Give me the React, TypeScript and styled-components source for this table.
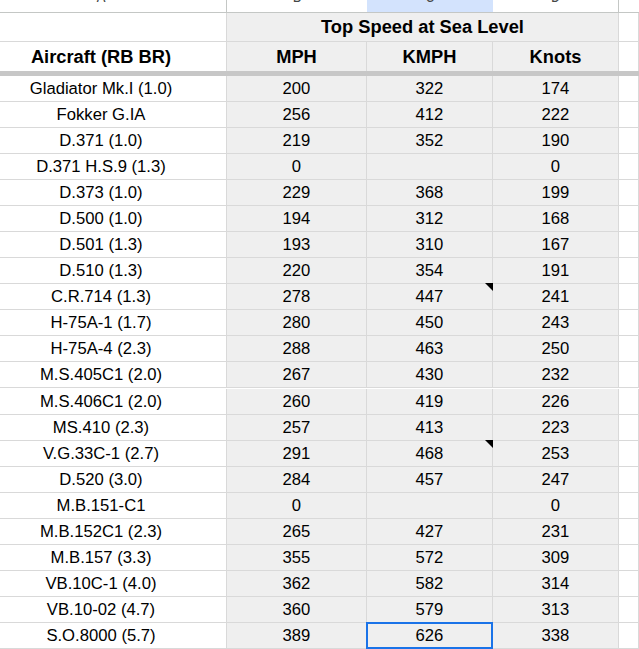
import React from "react";
import styled, { createGlobalStyle, css } from "styled-components";

const Global = createGlobalStyle`
  html, body { margin: 0; padding: 0; background: #fff; overflow: hidden; }
  body { font-family: "Liberation Sans", Arial, sans-serif; color: #000; }
`;

const Sheet = styled.div`
  display: grid;
  grid-template-columns: 227px 140px 126px 126px 1fr;
  width: 639px;
  height: 649px;
  overflow: hidden;
`;

const ColHead = styled.div<{ $selected?: boolean; $edge?: boolean }>`
  height: 13px;
  border-bottom: 1px solid #c4c7c5;
  border-right: ${(p) => (p.$edge ? "1px solid #c4c7c5" : "none")};
  background: ${(p) => (p.$selected ? "#d3e3fd" : "#fff")};
  display: flex;
  align-items: flex-end;
  justify-content: center;
  overflow: hidden;
  padding-bottom: 7px;
  box-sizing: border-box;
  font-family: Roboto, "Liberation Sans", sans-serif;
  font-size: 14px;
  color: #444746;
  line-height: 16px;
`;

const ColHeadA = styled(ColHead)`
  padding-right: 24px;
`;

const cellBase = css`
  box-sizing: border-box;
  border-right: 1px solid #d9d9d9;
  border-bottom: 1px solid #d9d9d9;
  display: flex;
  align-items: flex-end;
  justify-content: center;
  white-space: nowrap;
  overflow: visible;
`;

const TitleCell = styled.div<{ $fill?: boolean }>`
  ${cellBase};
  height: 29px;
  padding-bottom: 3px;
  background: ${(p) => (p.$fill ? "#efefef" : "#fff")};
  font-weight: bold;
  font-size: 18.3px;
`;

const MergedTitle = styled(TitleCell)`
  grid-column: span 3;
`;

const HeadCell = styled.div<{ $fill?: boolean; $first?: boolean }>`
  ${cellBase};
  height: 29px;
  border-bottom: none;
  padding-bottom: 3px;
  padding-right: ${(p) => (p.$first ? "24px" : "0")};
  background: ${(p) => (p.$fill ? "#efefef" : "#fff")};
  font-weight: bold;
  font-size: 18.3px;
`;

const FrozenBar = styled.div`
  grid-column: 1 / -1;
  height: 5px;
  background: #c7c7c7;
`;

const Cell = styled.div<{ $fill?: boolean; $first?: boolean; $note?: boolean; $active?: boolean }>`
  ${cellBase};
  position: relative;
  height: 26px;
  padding-bottom: 2px;
  padding-right: ${(p) => (p.$first ? "24px" : "0")};
  background: ${(p) => (p.$fill ? "#efefef" : "#fff")};
  font-size: 16.67px;
  ${(p) =>
    p.$note &&
    css`
      &::before {
        content: "";
        position: absolute;
        top: -1px;
        right: -1px;
        width: 0;
        height: 0;
        border-top: 8px solid #000;
        border-left: 8px solid transparent;
      }
    `}
  ${(p) =>
    p.$active &&
    css`
      &::after {
        content: "";
        position: absolute;
        top: -1px;
        left: -1px;
        right: -1px;
        bottom: -1px;
        border: 2px solid #1a73e8;
        pointer-events: none;
      }
    `}
`;

type Row = {
  name: string;
  mph: string;
  kmph: string;
  knots: string;
  note?: boolean;
  active?: boolean;
};

const rows: Row[] = [
  { name: "Gladiator Mk.I (1.0)", mph: "200", kmph: "322", knots: "174" },
  { name: "Fokker G.IA", mph: "256", kmph: "412", knots: "222" },
  { name: "D.371 (1.0)", mph: "219", kmph: "352", knots: "190" },
  { name: "D.371 H.S.9 (1.3)", mph: "0", kmph: "", knots: "0" },
  { name: "D.373 (1.0)", mph: "229", kmph: "368", knots: "199" },
  { name: "D.500 (1.0)", mph: "194", kmph: "312", knots: "168" },
  { name: "D.501 (1.3)", mph: "193", kmph: "310", knots: "167" },
  { name: "D.510 (1.3)", mph: "220", kmph: "354", knots: "191" },
  { name: "C.R.714 (1.3)", mph: "278", kmph: "447", knots: "241", note: true },
  { name: "H-75A-1 (1.7)", mph: "280", kmph: "450", knots: "243" },
  { name: "H-75A-4 (2.3)", mph: "288", kmph: "463", knots: "250" },
  { name: "M.S.405C1 (2.0)", mph: "267", kmph: "430", knots: "232" },
  { name: "M.S.406C1 (2.0)", mph: "260", kmph: "419", knots: "226" },
  { name: "MS.410 (2.3)", mph: "257", kmph: "413", knots: "223" },
  { name: "V.G.33C-1 (2.7)", mph: "291", kmph: "468", knots: "253", note: true },
  { name: "D.520 (3.0)", mph: "284", kmph: "457", knots: "247" },
  { name: "M.B.151-C1", mph: "0", kmph: "", knots: "0" },
  { name: "M.B.152C1 (2.3)", mph: "265", kmph: "427", knots: "231" },
  { name: "M.B.157 (3.3)", mph: "355", kmph: "572", knots: "309" },
  { name: "VB.10C-1 (4.0)", mph: "362", kmph: "582", knots: "314" },
  { name: "VB.10-02 (4.7)", mph: "360", kmph: "579", knots: "313" },
  { name: "S.O.8000 (5.7)", mph: "389", kmph: "626", knots: "338", active: true },
];

export default function App() {
  return (
    <>
      <Global />
      <Sheet>
        <ColHeadA $edge>A</ColHeadA>
        <ColHead>B</ColHead>
        <ColHead $selected>C</ColHead>
        <ColHead $edge>D</ColHead>
        <ColHead />

        <TitleCell />
        <MergedTitle $fill>Top Speed at Sea Level</MergedTitle>
        <TitleCell />

        <HeadCell $first>Aircraft (RB BR)</HeadCell>
        <HeadCell $fill>MPH</HeadCell>
        <HeadCell $fill>KMPH</HeadCell>
        <HeadCell $fill>Knots</HeadCell>
        <HeadCell />

        <FrozenBar />

        {rows.map((r) => (
          <React.Fragment key={r.name}>
            <Cell $first>{r.name}</Cell>
            <Cell $fill>{r.mph}</Cell>
            <Cell $fill $note={r.note} $active={r.active}>
              {r.kmph}
            </Cell>
            <Cell $fill>{r.knots}</Cell>
            <Cell />
          </React.Fragment>
        ))}
      </Sheet>
    </>
  );
}
